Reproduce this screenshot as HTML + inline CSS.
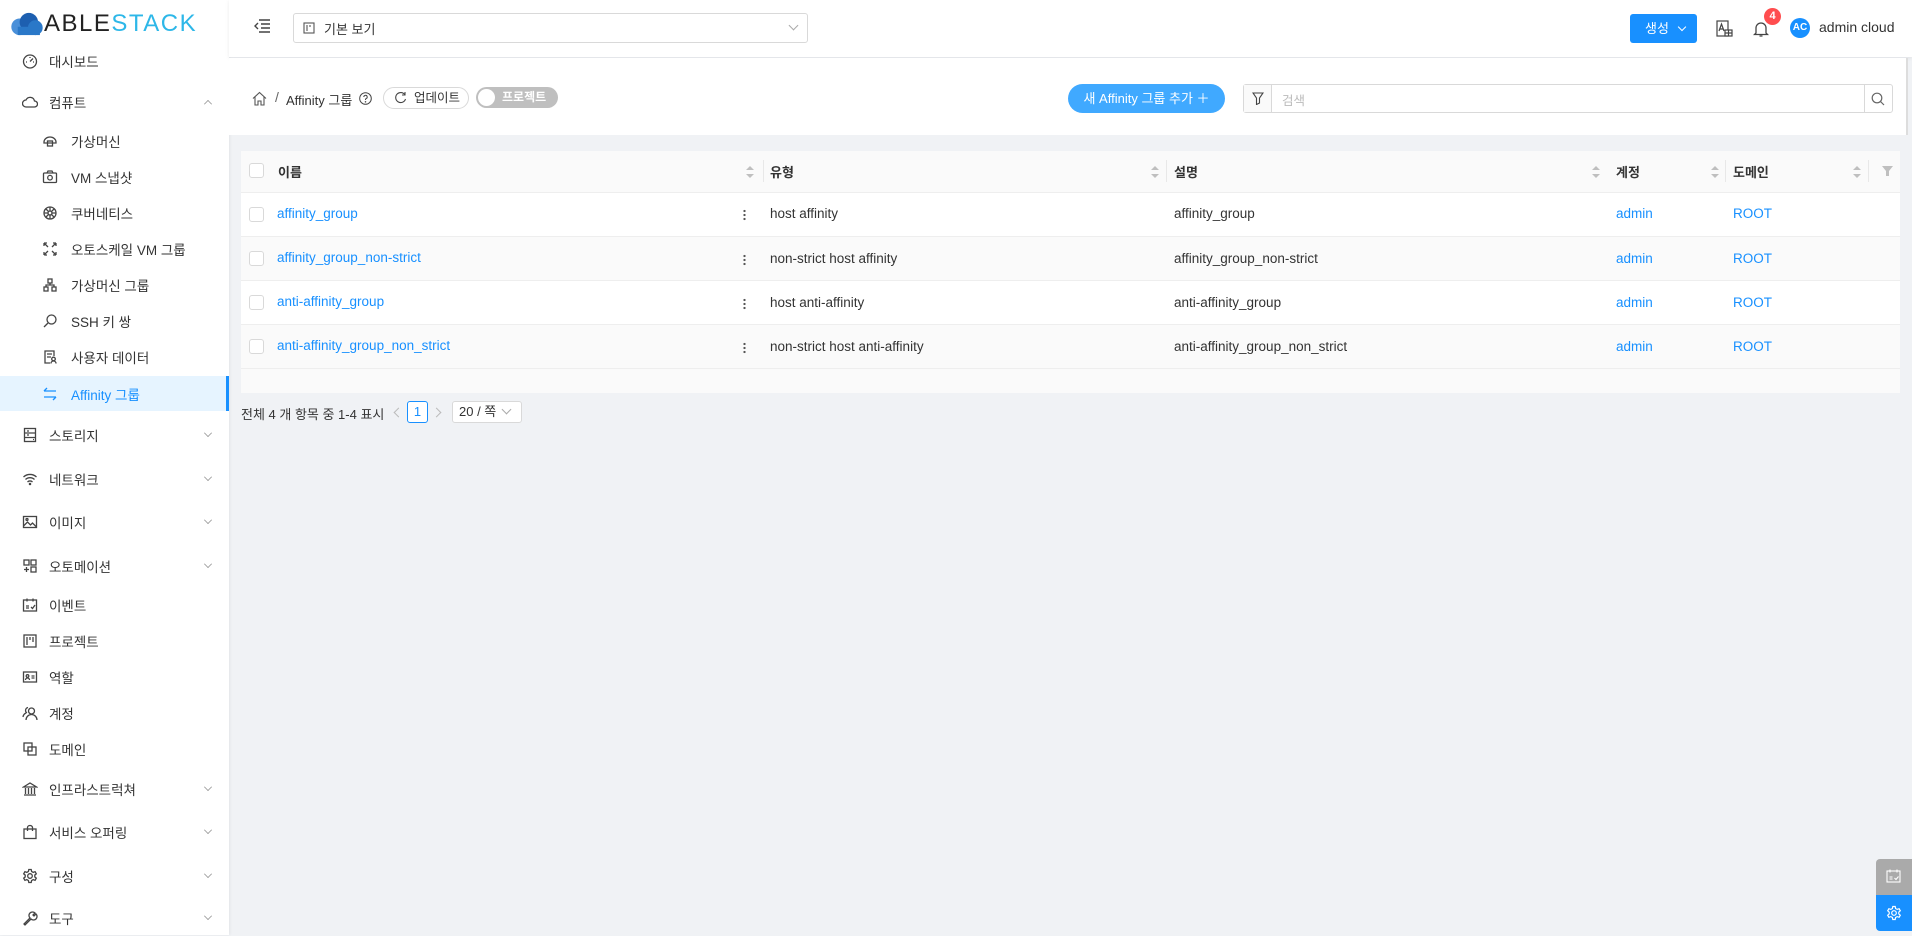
<!DOCTYPE html>
<html><head><meta charset="utf-8"><style>
*{box-sizing:border-box;margin:0;padding:0}
body{width:1912px;height:935px;overflow:hidden;background:#f0f2f5;font-family:"Liberation Sans","Noto Sans CJK KR",sans-serif;font-size:14px;color:#333;position:relative}
.abs{position:absolute}
#side{position:absolute;left:0;top:0;width:229px;height:935px;background:#fff;box-shadow:1px 0 3px rgba(0,0,0,.06)}
.mi{position:absolute;left:0;width:229px;height:36px;display:flex;align-items:center;font-size:13.5px;color:#333}
.mi svg{position:absolute;left:22px;width:16px;height:16px;fill:none;stroke:#444;stroke-width:1.3}
.mi span{position:absolute;left:49px}
.mi.sub svg{left:42px}
.mi.sub span{left:71px}
.mi .ar{position:absolute;left:204px;width:8px;height:8px;border-right:1.2px solid #888;border-bottom:1.2px solid #888;transform:rotate(45deg) scale(.7);margin-top:-4px}
.mi .ar.up{transform:rotate(-135deg) scale(.7);margin-top:3px}
.active{background:#e6f4ff;color:#1890ff}
.active:after{content:"";position:absolute;right:0;top:0;bottom:0;width:3px;background:#1890ff}
.active svg{stroke:#1890ff}
#hdr{position:absolute;left:229px;top:0;right:0;height:57px;background:#fff;box-shadow:0 1px 4px rgba(0,0,0,.08)}
.link{color:#1890ff}
.row{position:absolute;left:241px;width:1659px;height:44px;border-bottom:1px solid #eee}
.cb{position:absolute;left:249px;width:15px;height:15px;border:1px solid #d9d9d9;border-radius:3px;background:#fff}
.cell{position:absolute;font-size:13.5px}
.sort{position:absolute;width:8px;height:12px}
.sort:before,.sort:after{content:"";position:absolute;left:0;border-left:4px solid transparent;border-right:4px solid transparent}
.sort:before{top:0;border-bottom:4px solid #bfbfbf}
.sort:after{bottom:0;border-top:4px solid #bfbfbf}
.sep{position:absolute;width:1px;height:22px;background:#e8e8e8;top:160px}
.dots{position:absolute;left:743px;width:3px;height:12px;background:radial-gradient(circle,#555 1px,transparent 1.3px) 0 0/3px 4px repeat-y}
.th{position:absolute;top:162px;font-weight:bold;font-size:13px}
</style></head><body>

<div id="side">
 <div class="abs" style="left:10px;top:11px;width:215px;height:26px">
  <svg class="abs" style="left:0;top:1px" width="34" height="24" viewBox="0 0 36 26"><circle cx="10" cy="16" r="9" fill="#4a90d9"/><circle cx="20" cy="11" r="10" fill="#1d5fb0"/><circle cx="27" cy="17" r="8" fill="#2a78c8"/><rect x="8" y="16" width="24" height="9" fill="#2a78c8"/></svg>
  <span class="abs" style="left:34px;top:0;font-size:24px;letter-spacing:1.5px;color:#222;line-height:26px">ABLE<span style="color:#2db7e8">STACK</span></span>
 </div>
 <div class="mi" style="top:43px"><svg viewBox="0 0 16 16"><circle cx="8" cy="8.5" r="6.5"/><path d="M8 8.5l3-3M4 9h1M11 9h1M8 4v1"/></svg><span>대시보드</span></div>
 <div class="mi" style="top:84px"><svg viewBox="0 0 16 16"><path d="M4 13h8.5a3 3 0 0 0 0-6 4.5 4.5 0 0 0-8.5-1A3.5 3.5 0 0 0 4 13z"/></svg><span>컴퓨트</span><i class="ar up"></i></div>
 <div class="mi sub" style="top:123px"><svg viewBox="0 0 16 16"><path d="M2 9a6 5 0 0 1 12 0v1H2z"/><rect x="5.5" y="8" width="5" height="5"/></svg><span>가상머신</span></div>
 <div class="mi sub" style="top:159px"><svg viewBox="0 0 16 16"><rect x="1.5" y="4" width="13" height="9.5" rx="1"/><circle cx="8" cy="8.7" r="2.3"/><path d="M5 4l1-2h4l1 2"/></svg><span>VM 스냅샷</span></div>
 <div class="mi sub" style="top:195px"><svg viewBox="0 0 16 16"><circle cx="8" cy="8" r="6"/><circle cx="8" cy="8" r="2"/><path d="M8 2v4M8 10v4M2 8h4M10 8h4M4 4l3 3M9 9l3 3M12 4L9 7M7 9l-3 3"/></svg><span>쿠버네티스</span></div>
 <div class="mi sub" style="top:231px"><svg viewBox="0 0 16 16"><path d="M2 2l4 4M2 2v3M2 2h3M14 2l-4 4M14 2v3M14 2h-3M2 14l4-4M2 14v-3M2 14h3M14 14l-4-4M14 14v-3M14 14h-3"/></svg><span>오토스케일 VM 그룹</span></div>
 <div class="mi sub" style="top:267px"><svg viewBox="0 0 16 16"><rect x="6" y="2" width="4" height="4"/><rect x="2" y="10" width="4" height="4"/><rect x="10" y="10" width="4" height="4"/><path d="M8 6v2M4 10V8h8v2"/></svg><span>가상머신 그룹</span></div>
 <div class="mi sub" style="top:303px"><svg viewBox="0 0 16 16"><circle cx="9.5" cy="6.5" r="4.5"/><path d="M6 10l-4 4"/></svg><span>SSH 키 쌍</span></div>
 <div class="mi sub" style="top:339px"><svg viewBox="0 0 16 16"><path d="M12 7V2H3v12h5M5 5h5M5 8h4"/><circle cx="11.5" cy="10" r="1.8"/><path d="M9 14.5a2.5 2.5 0 0 1 5 0"/></svg><span>사용자 데이터</span></div>
 <div class="mi sub active" style="top:376px;height:35px"><svg viewBox="0 0 16 16"><path d="M2 5h12M2 5l3-3M14 11H2M14 11l-3 3"/></svg><span>Affinity 그룹</span></div>
 <div class="mi" style="top:417px"><svg viewBox="0 0 16 16"><rect x="2.5" y="1.5" width="11" height="13"/><path d="M2.5 6h11M2.5 10.5h11M5 4h2M5 8h2M11 12.5h1"/></svg><span>스토리지</span><i class="ar"></i></div>
 <div class="mi" style="top:461px"><svg viewBox="0 0 16 16"><path d="M1.5 6a9.5 9.5 0 0 1 13 0M3.5 8.5a6.5 6.5 0 0 1 9 0M5.5 11a3.5 3.5 0 0 1 5 0"/><circle cx="8" cy="13" r=".6" fill="#444"/></svg><span>네트워크</span><i class="ar"></i></div>
 <div class="mi" style="top:504px"><svg viewBox="0 0 16 16"><rect x="1.5" y="2.5" width="13" height="11"/><path d="M1.5 12l4-4 3 3 2-2 4 4"/><circle cx="5" cy="5.5" r="1"/></svg><span>이미지</span><i class="ar"></i></div>
 <div class="mi" style="top:548px"><svg viewBox="0 0 16 16"><rect x="2" y="2" width="5" height="5"/><rect x="9" y="2" width="5" height="5"/><rect x="9" y="9" width="5" height="5"/><path d="M4.5 9v5M2 11.5h5"/></svg><span>오토메이션</span><i class="ar"></i></div>
 <div class="mi" style="top:587px"><svg viewBox="0 0 16 16"><rect x="1.5" y="3" width="13" height="11"/><path d="M5 1.5v3M11 1.5v3M4 9h3M4 11h3M9 10l1.5 1.5L13 8"/></svg><span>이벤트</span></div>
 <div class="mi" style="top:623px"><svg viewBox="0 0 16 16"><rect x="2" y="2" width="12" height="12"/><path d="M5 4v8M8 4v3M11 4v5"/></svg><span>프로젝트</span></div>
 <div class="mi" style="top:659px"><svg viewBox="0 0 16 16"><rect x="1.5" y="3" width="13" height="10"/><circle cx="5.5" cy="7" r="1.3"/><path d="M3.5 11a2 2 0 0 1 4 0M9.5 7h3M9.5 9h3"/></svg><span>역할</span></div>
 <div class="mi" style="top:695px"><svg viewBox="0 0 16 16"><circle cx="9.5" cy="6" r="3"/><path d="M4 15a5.5 5.5 0 0 1 11 0M6 2.5a3 3 0 0 0-1 5.5M1 12a5 5 0 0 1 3-4"/></svg><span>계정</span></div>
 <div class="mi" style="top:731px"><svg viewBox="0 0 16 16"><rect x="2" y="2" width="8" height="8"/><rect x="6" y="6" width="8" height="8"/></svg><span>도메인</span></div>
 <div class="mi" style="top:771px"><svg viewBox="0 0 16 16"><path d="M1.5 6L8 2l6.5 4zM2 14h12M3.5 7v6M6.5 7v6M9.5 7v6M12.5 7v6"/></svg><span>인프라스트럭쳐</span><i class="ar"></i></div>
 <div class="mi" style="top:814px"><svg viewBox="0 0 16 16"><rect x="2" y="5" width="12" height="9.5"/><path d="M5.5 7V3.5a2.5 2 0 0 1 5 0V7"/></svg><span>서비스 오퍼링</span><i class="ar"></i></div>
 <div class="mi" style="top:858px"><svg viewBox="0 0 16 16"><circle cx="8" cy="8" r="2.3"/><path d="M6.8 1.5h2.4l.4 2 1.6.9 1.9-.7 1.2 2.1-1.5 1.3v1.8l1.5 1.3-1.2 2.1-1.9-.7-1.6.9-.4 2H6.8l-.4-2-1.6-.9-1.9.7-1.2-2.1 1.5-1.3V7.1L1.7 5.8l1.2-2.1 1.9.7 1.6-.9z"/></svg><span>구성</span><i class="ar"></i></div>
 <div class="mi" style="top:900px"><svg viewBox="0 0 16 16"><path d="M2 14l6-6a3.5 3.5 0 0 1 5-5l-2 2 1 1 2-2a3.5 3.5 0 0 1-5 5l-6 6z"/></svg><span>도구</span><i class="ar"></i></div>
</div>

<div id="hdr">
 <svg class="abs" style="left:24px;top:18px" width="18" height="16" viewBox="0 0 18 16" fill="none" stroke="#444" stroke-width="1.4"><path d="M6 2h11M8 6h9M8 10h9M6 14h11M5 5L2 8l3 3"/></svg>
 <div class="abs" style="left:64px;top:13px;width:515px;height:30px;border:1px solid #d9d9d9;border-radius:3px;background:#fff">
  <svg class="abs" style="left:9px;top:8px" width="12" height="12" viewBox="0 0 12 12" fill="none" stroke="#555" stroke-width="1.1"><rect x="1" y="1" width="10" height="10"/><path d="M4 3v6M7 3v2"/></svg>
  <span class="abs" style="left:30px;top:5px;font-size:13px;color:#333">기본 보기</span>
  <span class="abs" style="right:10px;top:8px;width:7px;height:7px;border-right:1px solid #aaa;border-bottom:1px solid #aaa;transform:rotate(45deg)"></span>
 </div>
 <div class="abs" style="left:1401px;top:14px;width:67px;height:29px;background:#1890ff;border-radius:3px;color:#fff;font-size:13px;line-height:29px;padding-left:15px">생성 <span style="display:inline-block;width:6px;height:6px;border-right:1px solid #fff;border-bottom:1px solid #fff;transform:rotate(45deg);margin:0 0 3px 6px"></span></div>
 <svg class="abs" style="left:1487px;top:20px" width="17" height="18" viewBox="0 0 17 18" fill="none" stroke="#444" stroke-width="1.2"><rect x="1" y="1" width="11" height="15"/><path d="M3 11l2.5-7L8 11M4 9h3"/><rect x="9" y="10" width="7" height="6" fill="#fff"/><path d="M12.5 10v6M9 13h7"/></svg>
 <svg class="abs" style="left:1524px;top:20px" width="16" height="18" viewBox="0 0 16 18" fill="none" stroke="#444" stroke-width="1.3"><path d="M3 13V8a5 5 0 0 1 10 0v5l1.5 1.5h-13zM6.5 16h3"/></svg>
 <div class="abs" style="left:1535px;top:8px;width:17px;height:17px;border-radius:50%;background:#ff4d4f;color:#fff;font-size:11px;font-weight:bold;text-align:center;line-height:17px">4</div>
 <div class="abs" style="left:1561px;top:18px;width:20px;height:20px;border-radius:50%;background:#1890ff;color:#fff;font-size:10px;text-align:center;line-height:20px;font-weight:bold">AC</div>
 <span class="abs" style="left:1590px;top:19px;font-size:14px;color:#333">admin cloud</span>
</div>

<div class="abs" style="left:229px;top:58px;width:1677px;height:77px;background:#fff"></div>
<div class="abs" style="left:1906px;top:58px;width:2px;height:77px;background:#ddd"></div>
<svg class="abs" style="left:252px;top:91px" width="15" height="15" viewBox="0 0 15 15" fill="none" stroke="#555" stroke-width="1.1"><path d="M1 7.5L7.5 1.5 14 7.5M3 6v8h3v-4h3v4h3V6"/></svg>
<span class="abs" style="left:275px;top:89px;color:#666">/</span>
<span class="abs" style="left:286px;top:90px;font-size:13px;color:#333">Affinity 그룹</span>
<svg class="abs" style="left:359px;top:92px" width="13" height="13" viewBox="0 0 13 13" fill="none" stroke="#444" stroke-width="1"><circle cx="6.5" cy="6.5" r="5.8"/><path d="M4.8 5a1.7 1.7 0 1 1 2.3 1.6c-.5.2-.6.5-.6 1V8"/><circle cx="6.5" cy="9.8" r=".3" fill="#444"/></svg>
<div class="abs" style="left:383px;top:87px;width:86px;height:22px;border:1px solid #d9d9d9;border-radius:11px;background:#fff;font-size:12.5px;line-height:20px;padding-left:30px">업데이트</div>
<svg class="abs" style="left:394px;top:91px" width="13" height="13" viewBox="0 0 13 13" fill="none" stroke="#444" stroke-width="1.1"><path d="M11 4A5 5 0 1 0 11.5 8M11 1v3H8"/></svg>
<div class="abs" style="left:476px;top:87px;width:82px;height:21px;border-radius:11px;background:#bfbfbf;color:#fff;font-size:12px;line-height:21px;padding-left:26px;font-weight:bold">프로젝트</div>
<div class="abs" style="left:478px;top:89px;width:17px;height:17px;border-radius:50%;background:#fff"></div>

<div class="abs" style="left:1068px;top:84px;width:157px;height:29px;border-radius:15px;background:#40a9ff;color:#fff;font-size:13px;line-height:29px;text-align:center">새 Affinity 그룹 추가 ＋</div>
<div class="abs" style="left:1243px;top:84px;width:650px;height:29px;border:1px solid #d9d9d9;border-radius:3px;background:#fff">
 <div class="abs" style="left:0;top:0;width:28px;height:27px;background:#fafafa;border-right:1px solid #d9d9d9"></div>
 <svg class="abs" style="left:8px;top:7px" width="12" height="13" viewBox="0 0 12 13" fill="none" stroke="#444" stroke-width="1.1"><path d="M1 1h10L7.5 6v5l-3 1.5V6z"/></svg>
 <span class="abs" style="left:38px;top:5px;font-size:12.5px;color:#bbb">검색</span>
 <div class="abs" style="right:0;top:0;width:28px;height:27px;border-left:1px solid #d9d9d9"></div>
 <svg class="abs" style="right:7px;top:7px" width="14" height="14" viewBox="0 0 14 14" fill="none" stroke="#666" stroke-width="1.2"><circle cx="6" cy="6" r="4.8"/><path d="M9.5 9.5L13 13"/></svg>
</div>

<div class="abs" style="left:241px;top:151px;width:1659px;height:242px;background:#fafafa"></div>
<div class="abs" style="left:241px;top:151px;width:1659px;height:42px;background:#fafafa;border-bottom:1px solid #eee"></div>
<div class="cb" style="top:163px"></div>
<span class="th" style="left:278px">이름</span>
<i class="sort" style="left:746px;top:166px"></i><div class="sep" style="left:763px"></div>
<span class="th" style="left:770px">유형</span>
<i class="sort" style="left:1151px;top:166px"></i><div class="sep" style="left:1166px"></div>
<span class="th" style="left:1174px">설명</span>
<i class="sort" style="left:1592px;top:166px"></i>
<span class="th" style="left:1616px">계정</span>
<i class="sort" style="left:1711px;top:166px"></i><div class="sep" style="left:1725px"></div>
<span class="th" style="left:1733px">도메인</span>
<i class="sort" style="left:1853px;top:166px"></i><div class="sep" style="left:1868px"></div>
<svg class="abs" style="left:1882px;top:166px" width="11" height="10" viewBox="0 0 11 10"><path d="M0 0h11L7 5v5H4V5z" fill="#bfbfbf"/></svg>

<div class="row" style="top:193px;background:#fff"></div>
<div class="row" style="top:237px;background:#fafafa"></div>
<div class="row" style="top:281px;background:#fff"></div>
<div class="row" style="top:325px;background:#fafafa"></div>

<div class="cb" style="top:207px"></div><span class="cell link" style="left:277px;top:206px">affinity_group</span><i class="dots" style="top:209px"></i><span class="cell" style="left:770px;top:206px">host affinity</span><span class="cell" style="left:1174px;top:206px">affinity_group</span><span class="cell link" style="left:1616px;top:206px">admin</span><span class="cell link" style="left:1733px;top:206px">ROOT</span>
<div class="cb" style="top:251px"></div><span class="cell link" style="left:277px;top:250px">affinity_group_non-strict</span><i class="dots" style="top:254px"></i><span class="cell" style="left:770px;top:251px">non-strict host affinity</span><span class="cell" style="left:1174px;top:251px">affinity_group_non-strict</span><span class="cell link" style="left:1616px;top:251px">admin</span><span class="cell link" style="left:1733px;top:251px">ROOT</span>
<div class="cb" style="top:295px"></div><span class="cell link" style="left:277px;top:294px">anti-affinity_group</span><i class="dots" style="top:298px"></i><span class="cell" style="left:770px;top:295px">host anti-affinity</span><span class="cell" style="left:1174px;top:295px">anti-affinity_group</span><span class="cell link" style="left:1616px;top:295px">admin</span><span class="cell link" style="left:1733px;top:295px">ROOT</span>
<div class="cb" style="top:339px"></div><span class="cell link" style="left:277px;top:338px">anti-affinity_group_non_strict</span><i class="dots" style="top:342px"></i><span class="cell" style="left:770px;top:339px">non-strict host anti-affinity</span><span class="cell" style="left:1174px;top:339px">anti-affinity_group_non_strict</span><span class="cell link" style="left:1616px;top:339px">admin</span><span class="cell link" style="left:1733px;top:339px">ROOT</span>

<span class="abs" style="left:241px;top:404px;font-size:13px;color:#333">전체 4 개 항목 중 1-4 표시</span>
<span class="abs" style="left:395px;top:409px;width:7px;height:7px;border-left:1px solid #bbb;border-bottom:1px solid #bbb;transform:rotate(45deg)"></span>
<div class="abs" style="left:407px;top:401px;width:21px;height:22px;border:1px solid #1890ff;border-radius:3px;background:#fff;color:#1890ff;font-size:13px;text-align:center;line-height:20px">1</div>
<span class="abs" style="left:433px;top:409px;width:7px;height:7px;border-right:1px solid #bbb;border-top:1px solid #bbb;transform:rotate(45deg)"></span>
<div class="abs" style="left:452px;top:401px;width:70px;height:22px;border:1px solid #d9d9d9;border-radius:3px;background:#fff;font-size:13px;line-height:20px;padding-left:6px">20 / 쪽</div>
<span class="abs" style="left:503px;top:406px;width:7px;height:7px;border-right:1px solid #aaa;border-bottom:1px solid #aaa;transform:rotate(45deg)"></span>

<div class="abs" style="left:1876px;top:859px;width:36px;height:36px;background:#aaa;border-radius:4px 0 0 0"></div>
<svg class="abs" style="left:1886px;top:869px" width="15" height="14" viewBox="0 0 15 14" fill="none" stroke="#fff" stroke-width="1.1"><rect x="1" y="2" width="13" height="11"/><path d="M4 .5v3M11 .5v3M3.5 8h3M3.5 10h3M8.5 9l1.5 1.5L12.5 7.5"/></svg>
<div class="abs" style="left:1876px;top:895px;width:36px;height:36px;background:#1890ff;border-radius:0 0 0 4px"></div>
<svg class="abs" style="left:1886px;top:905px" width="16" height="16" viewBox="0 0 16 16" fill="none" stroke="#fff" stroke-width="1.2"><circle cx="8" cy="8" r="2.3"/><path d="M6.8 1.5h2.4l.4 2 1.6.9 1.9-.7 1.2 2.1-1.5 1.3v1.8l1.5 1.3-1.2 2.1-1.9-.7-1.6.9-.4 2H6.8l-.4-2-1.6-.9-1.9.7-1.2-2.1 1.5-1.3V7.1L1.7 5.8l1.2-2.1 1.9.7 1.6-.9z"/></svg>
</body></html>
